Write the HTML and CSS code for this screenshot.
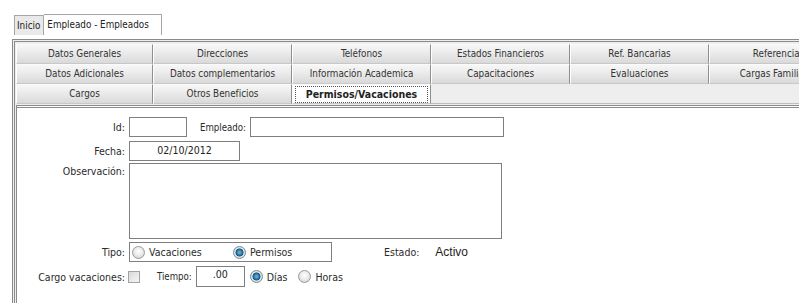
FILE: index.html
```html
<!DOCTYPE html>
<html lang="es">
<head>
<meta charset="utf-8">
<title>Empleado - Empleados</title>
<link rel="stylesheet" href="styles.css">
</head>
<body>
<div class="page">
  <div class="toptabs">
    <div class="toptab">Inicio</div>
    <div class="toptab active">Empleado - Empleados</div>
  </div>
  <div class="panel">
    <div class="tabgrid">
      <div class="tab">Datos Generales</div>
      <div class="tab">Direcciones</div>
      <div class="tab">Teléfonos</div>
      <div class="tab">Estados Financieros</div>
      <div class="tab">Ref. Bancarias</div>
      <div class="tab">Referencias</div>
      <div class="tab">Datos Adicionales</div>
      <div class="tab">Datos complementarios</div>
      <div class="tab">Información Academica</div>
      <div class="tab">Capacitaciones</div>
      <div class="tab">Evaluaciones</div>
      <div class="tab">Cargas Familiares</div>
      <div class="tab">Cargos</div>
      <div class="tab">Otros Beneficios</div>
      <div class="tab selected"><span class="focus">Permisos/Vacaciones</span></div>
      <div class="tab empty"></div>
    </div>
    <div class="content">
      <div class="row r1">
        <div class="label">Id:</div>
        <div class="field w-id"></div>
        <div class="label-inline emp">Empleado:</div>
        <div class="field w-emp"></div>
      </div>
      <div class="row r2">
        <div class="label">Fecha:</div>
        <div class="field w-fecha center">02/10/2012</div>
      </div>
      <div class="row r3">
        <div class="label top">Observación:</div>
        <div class="field area"></div>
      </div>
      <div class="row r4">
        <div class="label">Tipo:</div>
        <div class="radiobox">
          <span class="opt w-vac"><span class="radio"></span>Vacaciones</span>
          <span class="opt"><span class="radio on"></span>Permisos</span>
        </div>
        <div class="label-inline estado">Estado:</div>
        <div class="value">Activo</div>
      </div>
      <div class="row r5">
        <div class="label">Cargo vacaciones:</div>
        <span class="check"></span>
        <div class="label-inline tiempo">Tiempo:</div>
        <div class="field w-tiempo center">.00</div>
        <span class="opt dias"><span class="radio on"></span>Días</span>
        <span class="opt horas"><span class="radio"></span>Horas</span>
      </div>
    </div>
  </div>
</div>
</body>
</html>
```
FILE: styles.css
```css
html, body {
  margin: 0;
  padding: 0;
  background: #ffffff;
  overflow: hidden;
}
body {
  width: 799px;
  height: 303px;
  font-family: "DejaVu Sans Condensed", "DejaVu Sans", "Liberation Sans", sans-serif;
  font-stretch: condensed;
  font-size: 10.5px;
  color: #2b2b2b;
}
.page {
  padding-top: 14px;
  padding-left: 12px;
}
.toptabs {
  display: flex;
  align-items: flex-end;
  margin-left: 2px;
  height: 21px;
  margin-bottom: 4px;
  font-size: 9.8px;
}
.toptab {
  height: 20px;
  box-sizing: border-box;
  border: 1px solid #a6a6a6;
  border-bottom: none;
  background: #e9e9e9;
  padding: 0 3px 0 2px;
  line-height: 20px;
  color: #222;
}
.toptab.active {
  width: 118px;
  height: 21px;
  background: #ffffff;
  border-left: none;
  padding: 0 0 0 3px;
  line-height: 19px;
}
.panel {
  border-top: 3px double #8a8a8a;
  border-left: 3px double #8a8a8a;
  background: #eeeeee;
  padding: 2px 0 0 1px;
  height: 270px;
}
.tabgrid {
  display: grid;
  grid-template-columns: 137px repeat(5, 139px);
  grid-auto-rows: 20px;
  width: 832px;
  font-size: 9.8px;
}
.tab {
  box-sizing: border-box;
  background: linear-gradient(#f7f7f7, #e6e6e6 60%, #d9d9d9);
  border-right: 1px solid #8f8f8f;
  border-left: 1px solid #ffffff;
  border-bottom: 1px solid #c8c8c8;
  border-top: 1px solid #fafafa;
  text-align: center;
  line-height: 18px;
  color: #333;
  white-space: nowrap;
  overflow: hidden;
}
.tab.selected {
  background: #ffffff;
  font-weight: bold;
  padding: 1px 2px;
  line-height: 14px;
  color: #222;
}
.tab.selected .focus {
  display: block;
  border: 1px dotted #555;
  height: 15px;
  line-height: 15px;
  font-size: 10.5px;
}
.tab.empty {
  grid-column: 4 / 7;
  background: #eeeeee;
  border: none;
  border-bottom: 1px solid #bdbdbd;
}
.content {
  margin-top: 1px;
  border-top: 3px double #8a8a8a;
  border-left: 1px solid #8a8a8a;
  background: #ffffff;
  padding-top: 9px;
  height: 200px;
}
.row {
  display: flex;
  align-items: center;
}
.r2 { margin-top: 4px; }
.r3 { margin-top: 2px; align-items: flex-start; }
.r4 { margin-top: 3px; }
.r5 { margin-top: 4px; }
.label {
  width: 108px;
  margin-right: 4px;
  text-align: right;
  white-space: nowrap;
}
.label.top {
  padding-top: 2px;
}
.label-inline {
  white-space: nowrap;
}
.field {
  box-sizing: border-box;
  height: 20px;
  border: 1px solid #7f7f7f;
  background: #ffffff;
  line-height: 16px;
  color: #222;
}
.center { text-align: center; }
.w-id { width: 58px; }
.emp { margin-left: 13px; margin-right: 4px; font-size: 9.6px; }
.w-emp { width: 254px; }
.w-fecha { width: 111px; }
.area { width: 373px; height: 76px; }
.radiobox {
  box-sizing: border-box;
  width: 203px;
  height: 20px;
  border: 1px solid #7f7f7f;
  display: flex;
  align-items: center;
  padding-left: 2px;
}
.opt {
  display: inline-flex;
  align-items: center;
  white-space: nowrap;
}
.w-vac { width: 101px; }
.radio {
  box-sizing: border-box;
  display: inline-block;
  width: 13px;
  height: 13px;
  border-radius: 50%;
  border: 1px solid #9a9a9a;
  background: radial-gradient(circle at 50% 40%, #ffffff 0, #ececec 45%, #c9c9c9 100%);
  margin-right: 4px;
}
.radio.on {
  border-color: #6f8a99;
  background: radial-gradient(circle at 50% 50%, #6fb3d6 0, #2f7fae 2.5px, #1f4f6f 3.6px, #dfe9ef 4.4px, #c7d3da 100%);
}
.estado { margin-left: 52px; }
.value {
  margin-left: 16px;
  font-family: "Liberation Sans", Arial, sans-serif;
  font-stretch: normal;
  font-size: 12px;
  color: #222;
}
.check {
  box-sizing: border-box;
  display: inline-block;
  width: 12px;
  height: 12px;
  border: 1px solid #a3a3a3;
  background: linear-gradient(135deg, #d9d9d9, #f6f6f6);
  margin-left: -1px;
}
.tiempo { margin-left: 17px; margin-right: 4px; font-size: 9.6px; }
.w-tiempo { width: 49px; height: 21px; line-height: 14px; }
.dias { margin-left: 5px; }
.horas { margin-left: 11px; }
```
